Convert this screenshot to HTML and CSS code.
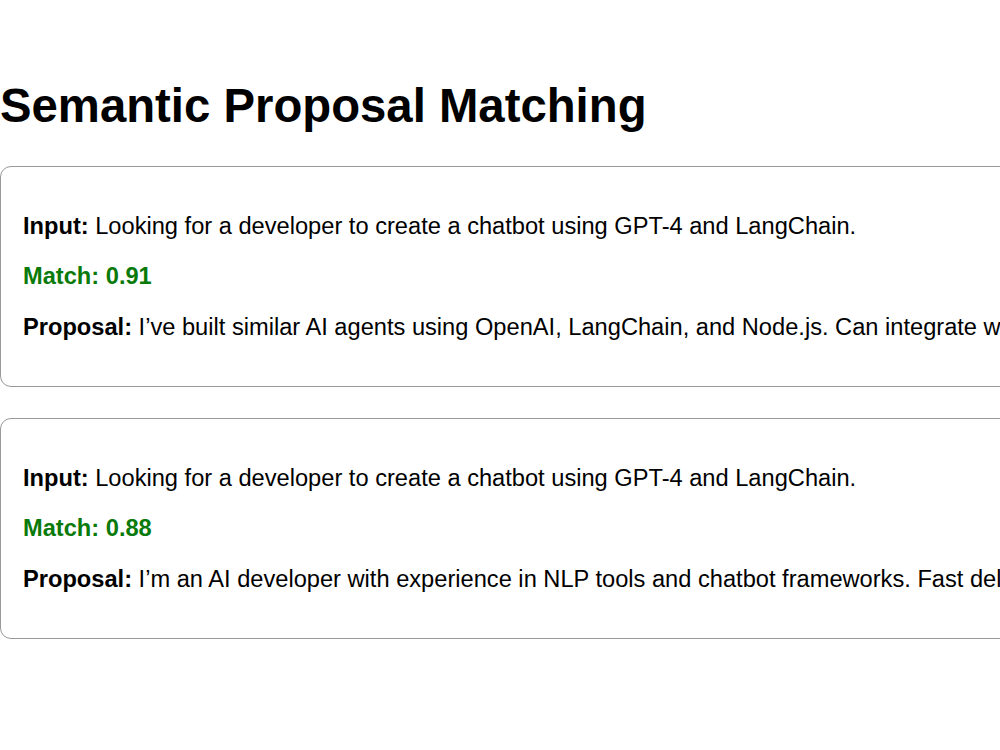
FILE: index.html
```html
<!DOCTYPE html>
<html lang="en">
<head>
  <meta charset="UTF-8">
  <title>Semantic Proposal Matching</title>
  <link rel="stylesheet" href="styles.css">
</head>
<body>

  <div class="page">
    <h1>Semantic Proposal Matching</h1>

    <div class="result">
      <p><strong>Input:</strong> Looking for a developer to create a chatbot using GPT-4 and LangChain.</p>
      <p class="score"><strong>Match: 0.91</strong></p>
      <p><strong>Proposal:</strong> I’ve built similar AI agents using OpenAI, LangChain, and Node.js. Can integrate with your existing stack quickly.</p>
    </div>

    <div class="result">
      <p><strong>Input:</strong> Looking for a developer to create a chatbot using GPT-4 and LangChain.</p>
      <p class="score"><strong>Match: 0.88</strong></p>
      <p><strong>Proposal:</strong> I’m an AI developer with experience in NLP tools and chatbot frameworks. Fast delivery guaranteed.</p>
    </div>
  </div>

</body>
</html>
```

FILE: styles.css
```css
* {
  box-sizing: border-box;
}

html, body {
  overflow: hidden;
}

body {
  font-family: "Liberation Sans", Arial, sans-serif;
  font-size: 23.65px;
  color: #000;
  background: #fff;
  margin: 0;
  padding: 0;
}

.page {
  width: 1400px;
  padding-top: 79px;
}

h1 {
  font-size: 47.3px;
  margin: 0 0 33px 0;
  line-height: 54px;
}

.result {
  border: 1.5px solid #999;
  border-radius: 11px;
  padding: 22px;
  margin-bottom: 31px;
}

.result p {
  margin: 23.5px 0;
  line-height: 27px;
  white-space: nowrap;
}

.score {
  color: #0a7a0a;
}
```
